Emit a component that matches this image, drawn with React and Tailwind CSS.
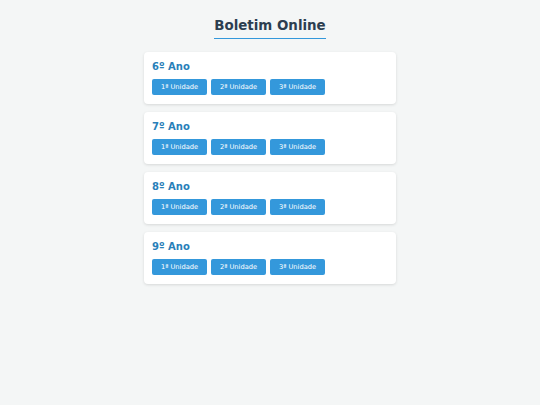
const anos = ['6º Ano', '7º Ano', '8º Ano', '9º Ano'];
const unidades = ['1ª Unidade', '2ª Unidade', '3ª Unidade'];

export default function App() {
  return (
    <div className="min-h-screen bg-[#f4f6f6] pt-[17px]" style={{ fontFamily: '"DejaVu Sans", Verdana, sans-serif' }}>
      <div className="flex justify-center">
        <h1 className="text-[13.4px] font-bold text-[#2c3e50] border-b border-[#3498db] pb-[3px] leading-[18px]">
          Boletim Online
        </h1>
      </div>

      <div className="w-[252px] mx-auto mt-[13px] flex flex-col gap-[8px]">
        {anos.map((ano) => (
          <div key={ano} className="bg-white rounded-[4px] shadow-[0_1px_3px_rgba(0,0,0,0.12)] px-[8px] pt-[9px] pb-[9px]">
            <h2 className="text-[10px] font-bold text-[#2980b9] leading-[12px] mb-[6px]">{ano}</h2>
            <div className="flex gap-[4px]">
              {unidades.map((u) => (
                <button key={u} className="w-[55px] h-[16px] bg-[#3498db] text-white text-[6.7px] rounded-[2px] leading-none">
                  {u}
                </button>
              ))}
            </div>
          </div>
        ))}
      </div>
    </div>
  );
}
